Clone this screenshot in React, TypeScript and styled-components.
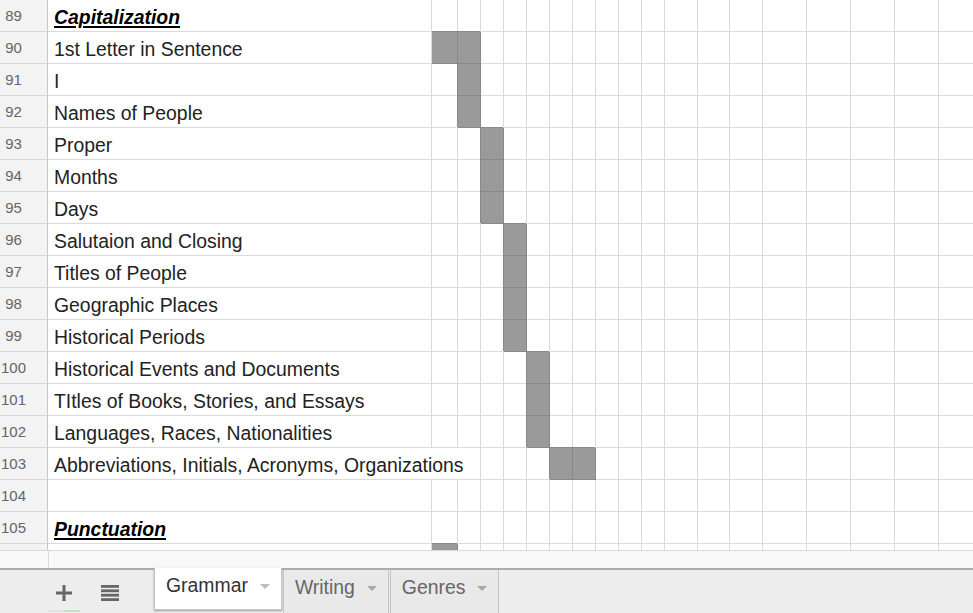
import React from "react";
import styled, { createGlobalStyle } from "styled-components";

const GlobalStyle = createGlobalStyle`
  html, body {
    margin: 0;
    padding: 0;
    background: #fff;
    overflow: hidden;
  }
  * {
    box-sizing: border-box;
  }
`;

const COLUMNS =
  "48px 384px 26px repeat(9, 23px) 33px 32px 33px repeat(5, 44px)";
const SMALL_COLS = 18;

type RowData = {
  num: number;
  text?: string;
  title?: boolean;
  filled?: number[];
  spill?: number; // how many small columns the text runs over
  partial?: boolean;
};

const rows: RowData[] = [
  { num: 89, text: "Capitalization", title: true },
  { num: 90, text: "1st Letter in Sentence", filled: [0, 1] },
  { num: 91, text: "I", filled: [1] },
  { num: 92, text: "Names of People", filled: [1] },
  { num: 93, text: "Proper", filled: [2] },
  { num: 94, text: "Months", filled: [2] },
  { num: 95, text: "Days", filled: [2] },
  { num: 96, text: "Salutaion and Closing", filled: [3] },
  { num: 97, text: "Titles of People", filled: [3] },
  { num: 98, text: "Geographic Places", filled: [3] },
  { num: 99, text: "Historical Periods", filled: [3] },
  { num: 100, text: "Historical Events and Documents", filled: [4] },
  { num: 101, text: "TItles of Books, Stories, and Essays", filled: [4] },
  { num: 102, text: "Languages, Races, Nationalities", filled: [4] },
  {
    num: 103,
    text: "Abbreviations, Initials, Acronyms, Organizations",
    filled: [5, 6],
    spill: 2,
  },
  { num: 104 },
  { num: 105, text: "Punctuation", title: true },
  { num: 106, filled: [0], partial: true },
];

const tabs = [
  { name: "Grammar", active: true },
  { name: "Writing", active: false },
  { name: "Genres", active: false },
];

const App = () => {
  return (
    <>
      <GlobalStyle />
      <Page>
        <Sheet>
          {rows.map((row) => {
            const spill = row.spill ?? 0;
            return (
              <Row key={row.num}>
                <RowHeader>{row.partial ? "" : row.num}</RowHeader>
                <TextCell $title={row.title} $spill={spill > 0}>
                  {row.text}
                </TextCell>
                {Array.from({ length: SMALL_COLS }).map((_, i) => (
                  <Cell
                    key={i}
                    $filled={row.filled?.includes(i)}
                    $spill={i < spill - 1}
                  />
                ))}
              </Row>
            );
          })}
        </Sheet>
        <ScrollStrip>
          <StripCorner />
        </ScrollStrip>
        <TabBar>
          <Controls>
            <IconButton $underline>
              <svg width="16" height="16" viewBox="0 0 16 16">
                <rect x="6.5" y="0" width="3" height="16" fill="#666" />
                <rect x="0" y="6.5" width="16" height="3" fill="#666" />
              </svg>
            </IconButton>
            <IconButton>
              <svg width="18" height="16" viewBox="0 0 18 16">
                <rect x="0" y="0" width="18" height="2.8" fill="#666" />
                <rect x="0" y="4.4" width="18" height="2.8" fill="#666" />
                <rect x="0" y="8.8" width="18" height="2.8" fill="#666" />
                <rect x="0" y="13.2" width="18" height="2.8" fill="#666" />
              </svg>
            </IconButton>
          </Controls>
          <Tabs>
            {tabs.map((tab) => (
              <Tab key={tab.name} $active={tab.active}>
                <TabLabel $active={tab.active}>{tab.name}</TabLabel>
                <Caret $active={tab.active} />
              </Tab>
            ))}
          </Tabs>
        </TabBar>
      </Page>
    </>
  );
};

export default App;

const Page = styled.div`
  width: 973px;
  height: 613px;
  display: flex;
  flex-direction: column;
  overflow: hidden;
  font-family: "Liberation Sans", Arial, sans-serif;
`;

const Sheet = styled.div`
  height: 550px;
  overflow: hidden;
  flex-shrink: 0;
`;

const Row = styled.div`
  display: grid;
  grid-template-columns: ${COLUMNS};
  height: 32px;
`;

const RowHeader = styled.div`
  height: 32px;
  background: #f3f3f3;
  border-right: 1px solid #c6c6c6;
  border-bottom: 1px solid #d6d6d6;
  padding-right: 20px;
  text-align: center;
  font-size: 15px;
  line-height: 31px;
  color: #666;
`;

const TextCell = styled.div<{ $title?: boolean; $spill?: boolean }>`
  position: relative;
  z-index: 1;
  height: 32px;
  border-right: 1px solid ${(p) => (p.$spill ? "transparent" : "#dadada")};
  border-bottom: 1px solid #dadada;
  padding: 4px 0 0 6px;
  font-size: 19.4px;
  line-height: 27px;
  white-space: nowrap;
  overflow: visible;
  color: ${(p) => (p.$title ? "#000" : "#222")};
  font-weight: ${(p) => (p.$title ? "bold" : "normal")};
  font-style: ${(p) => (p.$title ? "italic" : "normal")};
  text-decoration: ${(p) => (p.$title ? "underline" : "none")};
  text-underline-offset: 2px;
  text-decoration-thickness: 2px;
`;

const Cell = styled.div<{ $filled?: boolean; $spill?: boolean }>`
  height: 32px;
  border-right: 1px solid
    ${(p) => (p.$filled ? "#888" : p.$spill ? "transparent" : "#dadada")};
  border-bottom: 1px solid ${(p) => (p.$filled ? "#888" : "#dadada")};
  background: ${(p) => (p.$filled ? "#9a9a9a" : "transparent")};
  box-shadow: ${(p) => (p.$filled ? "-1px -1px 0 #888" : "none")};
`;

const ScrollStrip = styled.div`
  height: 18px;
  flex-shrink: 0;
  background: #f8f8f8;
  border-top: 1px solid #dadada;
  display: flex;
`;

const StripCorner = styled.div`
  width: 49px;
  border-right: 1px solid #dadada;
`;

const TabBar = styled.div`
  flex: 1;
  display: flex;
  align-items: flex-start;
  background: #ededed;
  border-top: 2px solid #acacac;
`;

const Controls = styled.div`
  width: 154px;
  height: 43px;
  display: flex;
  align-items: center;
  gap: 14px;
  padding: 4px 0 0 48px;
`;

const IconButton = styled.div<{ $underline?: boolean }>`
  width: 32px;
  height: 37px;
  display: flex;
  align-items: center;
  justify-content: center;
  border-bottom: 2px solid transparent;
  border-image: ${(p) =>
    p.$underline
      ? "linear-gradient(to right, #e2e2e2 50%, #bfe3c1 50%) 1"
      : "none"};
`;

const Tabs = styled.div`
  display: flex;
  align-items: flex-start;
  gap: 1px;
  margin-top: -2px;
`;

const Tab = styled.div<{ $active?: boolean }>`
  display: flex;
  align-items: center;
  gap: 12px;
  padding: ${(p) => (p.$active ? "0 11px 7px 11px" : "0 11px 9px 11px")};
  height: ${(p) => (p.$active ? "42px" : "45px")};
  margin-top: ${(p) => (p.$active ? "0" : "2px")};
  background: ${(p) => (p.$active ? "#fff" : "#e9e9e9")};
  border: 1px solid #c4c4c4;
  border-top: none;
  box-shadow: ${(p) => (p.$active ? "0 1px 2px rgba(0, 0, 0, 0.35)" : "none")};
`;

const TabLabel = styled.span<{ $active?: boolean }>`
  font-size: 19.4px;
  color: ${(p) => (p.$active ? "#333" : "#666")};
`;

const Caret = styled.span<{ $active?: boolean }>`
  width: 0;
  height: 0;
  border-left: 5px solid transparent;
  border-right: 5px solid transparent;
  border-top: 5px solid ${(p) => (p.$active ? "#bbb" : "#a8a8a8")};
  margin-top: 2px;
`;
